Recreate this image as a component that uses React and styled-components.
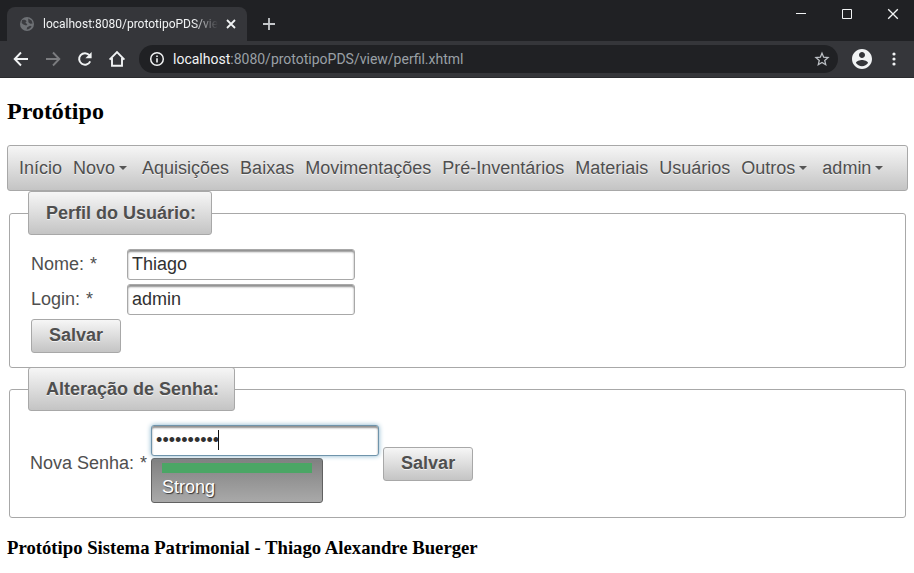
import React, { useState } from "react";
import styled, { createGlobalStyle, css } from "styled-components";

const GlobalStyle = createGlobalStyle`
  * { box-sizing: border-box; }
  body {
    margin: 0;
    background: #fff;
    color: #000;
    font-family: "Liberation Serif", "Times New Roman", serif;
  }
`;

const sans = css`
  font-family: "Liberation Sans", Arial, sans-serif;
  font-size: 18px;
  line-height: 20px;
`;

const greyFace = css`
  border: 1px solid #a8a8a8;
  border-radius: 3px;
  background: linear-gradient(to bottom, #f6f6f6 0%, #c4c4c4 100%);
  color: #4f4f4f;
  text-shadow: 0 1px 0 rgba(255, 255, 255, 0.7);
`;

/* Browser window */

const BrowserChrome = styled.header`
  background: #202124;
  color: #f1f3f4;
  font-family: Roboto, "Segoe UI", sans-serif;
`;

const TabStrip = styled.div`
  display: flex;
  align-items: flex-start;
  height: 41px;
  padding-left: 7px;
`;

const Tab = styled.div`
  display: flex;
  align-items: center;
  width: 240px;
  height: 34px;
  margin-top: 7px;
  padding: 0 8px 0 12px;
  border-radius: 8px 8px 0 0;
  background: #35363a;
`;

const TabTitle = styled.span`
  flex: 1;
  min-width: 0;
  margin: 0 5px 0 8px;
  overflow: hidden;
  white-space: nowrap;
  font-size: 12px;
  line-height: 16px;
  mask-image: linear-gradient(to right, #000 86%, transparent 100%);
`;

const IconButton = styled.button`
  display: flex;
  flex: none;
  align-items: center;
  justify-content: center;
  width: ${(p) => p.$size}px;
  height: ${(p) => p.$size}px;
  padding: 0;
  border: 0;
  background: none;
  color: ${(p) => p.$color || "#f1f3f4"};
`;

const NewTab = styled(IconButton)`
  margin: 10px 0 0 8px;
`;

const WindowControls = styled.div`
  display: flex;
  gap: 18px;
  margin-left: auto;
  padding-right: 7px;
`;

const Toolbar = styled.div`
  display: flex;
  align-items: center;
  height: 37px;
  padding: 0 6px 0 7px;
  border-bottom: 1px solid #2a2b2e;
  background: #35363a;
`;

const NavButtons = styled.div`
  display: flex;
  gap: 4px;
  margin-right: 8px;
`;

const AddressBar = styled.div`
  display: flex;
  flex: 1;
  align-items: center;
  height: 28px;
  padding: 0 8px 0 10px;
  border-radius: 14px;
  background: #202124;
`;

const Address = styled.span`
  flex: 1;
  margin-left: 8px;
  font-size: 14px;
  line-height: 18px;
  color: #9aa0a6;

  b {
    font-weight: 400;
    color: #f1f3f4;
  }
`;

const ToolbarEnd = styled.div`
  display: flex;
  gap: 4px;
  margin-left: 10px;
`;

/* Page */

const Page = styled.main`
  padding: 19px 6px 8px 7px;
`;

const PageTitle = styled.h2`
  margin: 0 0 20px;
  font-size: 24px;
  line-height: 28px;
`;

const Menubar = styled.nav`
  ${sans}
  ${greyFace}
  display: flex;
  align-items: center;
  gap: 11px;
  min-height: 46px;
  padding: 0 11px;
  white-space: nowrap;
`;

const MenuLink = styled.a`
  display: flex;
  align-items: center;
  color: inherit;
  text-decoration: none;

  svg {
    margin: 0 4px;
  }
`;

const Fieldset = styled.fieldset`
  ${sans}
  min-width: 0;
  margin: 0 2px -1px;
  padding: 14px 21px 14px 18px;
  border: 1px solid #a8a8a8;
  border-radius: 3px;
  color: #4f4f4f;
`;

const Legend = styled.legend`
  ${greyFace}
  height: 44px;
  padding: 11px 15px 11px 17px;
  font-weight: 700;
`;

const ProfileForm = styled.form`
  display: grid;
  grid-template-columns: 92px 1fr;
  gap: 4px;
  justify-items: start;
  padding-left: 3px;
`;

const PasswordForm = styled.form`
  display: flex;
  align-items: center;
  gap: 4px;
  padding-left: 2px;
`;

const Label = styled.label`
  display: flex;
  align-self: center;
  align-items: baseline;
  gap: 6px;
  padding-bottom: 2px;
  white-space: nowrap;
`;

const TextInput = styled.input`
  ${sans}
  display: block;
  width: 228px;
  height: 31px;
  padding: 4px;
  border: 1px solid #a8a8a8;
  border-radius: 3px;
  outline: none;
  background: #fff;
  box-shadow: inset 0 2px 2px #8f8f8f;
  color: #313131;
  caret-color: transparent;

  ${(p) =>
    p.$active &&
    css`
      border-color: #6f94ab;
      box-shadow: 0 0 5px #85b2cb, inset 0 2px 2px #8f8f8f;
    `}
`;

const PushButton = styled.button`
  ${sans}
  ${greyFace}
  height: 34px;
  padding: 0 17px 2px;
  font-weight: 700;
`;

const PasswordField = styled.div`
  display: grid;
  gap: 2px;
`;

const InputWrap = styled.div`
  position: relative;
`;

const Caret = styled.span`
  position: absolute;
  top: 5px;
  left: 67px;
  width: 1px;
  height: 20px;
  background: #111;
`;

const StrengthPanel = styled.output`
  display: block;
  width: 172px;
  height: 45px;
  padding: 4px 10px;
  border: 1px solid #616161;
  border-radius: 3px;
  background: linear-gradient(to bottom, #808080, #a9a9a9);
  color: #fff;
  text-shadow: 1px 1px 1px #333;
`;

const StrengthBar = styled.div`
  height: 10px;
  margin-bottom: 4px;
  background: #4ba665;
`;

const Footer = styled.h3`
  margin: 21px 0 0;
  line-height: 20px;
`;

/* Icons */

const Icon = ({ size, box = 24, children }) => (
  <svg width={size} height={size} viewBox={`0 0 ${box} ${box}`} fill="none" stroke="currentColor" aria-hidden="true">
    {children}
  </svg>
);

const GlobeIcon = () => (
  <Icon size={16} box={16}>
    <circle cx="8" cy="8" r="7" fill="#6e7175" stroke="none" />
    <path
      d="M3 4.2C4.6 3.4 6.4 4 7.6 5.2L6.4 6.8 8.4 8.2 7.2 9.6 4.4 8.6 2.6 7zM9.2 2.6L12.6 4.4 13.6 7.4 11.2 7.8 9.4 6.2zM7.6 13.4L8.2 11.2 11 9.8 12.6 10.2C11.8 12 10 13.4 7.6 13.4z"
      fill="#3b3c40"
      stroke="none"
    />
  </Icon>
);

const ArrowIcon = ({ forward }) => (
  <Icon size={16} box={16}>
    <path d={forward ? "M1 8h13M8 1.5L14.3 8 8 14.5" : "M15 8H2M8 1.5L1.7 8 8 14.5"} strokeWidth="1.9" />
  </Icon>
);

const ReloadIcon = () => (
  <Icon size={16} box={16}>
    <path d="M13.2 10.4A5.8 5.8 0 1 1 12.4 4.2" strokeWidth="2" />
    <path d="M14.6 1v6.3H8.4z" fill="currentColor" stroke="none" />
  </Icon>
);

const HomeIcon = () => (
  <Icon size={18} box={18}>
    <path d="M1.6 9.6L9 2.2l7.4 7.4M4 8v7.8h10V8" strokeWidth="1.9" />
  </Icon>
);

const InfoIcon = () => (
  <Icon size={16} box={16}>
    <circle cx="8" cy="8" r="6.3" strokeWidth="1.5" />
    <path d="M8 7.2v4.2M8 4.4v1.7" strokeWidth="1.6" />
  </Icon>
);

const StarIcon = () => (
  <Icon size={16} box={24}>
    <path
      d="M12 3.2l2.5 6 6.6.6-5 4.3 1.5 6.4L12 17.1l-5.6 3.4 1.5-6.4-5-4.3 6.6-.6z"
      strokeWidth="1.9"
    />
  </Icon>
);

const ProfileIcon = () => (
  <Icon size={24}>
    <path
      d="M12 2C6.48 2 2 6.48 2 12s4.48 10 10 10 10-4.48 10-10S17.52 2 12 2zm0 3c1.66 0 3 1.34 3 3s-1.34 3-3 3-3-1.34-3-3 1.34-3 3-3zm0 14.2c-2.5 0-4.71-1.28-6-3.22.03-1.99 4-3.08 6-3.08 1.99 0 5.97 1.09 6 3.08-1.29 1.94-3.5 3.22-6 3.22z"
      fill="currentColor"
      stroke="none"
    />
  </Icon>
);

const DotsIcon = () => (
  <Icon size={16} box={16}>
    <g fill="currentColor" stroke="none">
      <circle cx="8" cy="3" r="1.6" />
      <circle cx="8" cy="8" r="1.6" />
      <circle cx="8" cy="13" r="1.6" />
    </g>
  </Icon>
);

const CrossIcon = ({ size, weight }) => (
  <Icon size={size} box={10}>
    <path d="M1 1l8 8M9 1L1 9" strokeWidth={weight} />
  </Icon>
);

const CaretDown = () => (
  <svg width="8" height="4" viewBox="0 0 8 4" aria-hidden="true">
    <path d="M0 0h8L4 4z" fill="#555" />
  </svg>
);

const menu = [
  { label: "Início" },
  { label: "Novo", submenu: true },
  { label: "Aquisições" },
  { label: "Baixas" },
  { label: "Movimentações" },
  { label: "Pré-Inventários" },
  { label: "Materiais" },
  { label: "Usuários" },
  { label: "Outros", submenu: true },
  { label: "admin", submenu: true },
];

function Field({ id, label, value, onChange }) {
  return (
    <>
      <Label htmlFor={id}>
        {label} <span>*</span>
      </Label>
      <TextInput id={id} value={value} onChange={(e) => onChange(e.target.value)} />
    </>
  );
}

export default function App() {
  const [name, setName] = useState("Thiago");
  const [login, setLogin] = useState("admin");
  const [password, setPassword] = useState("abcdefghij");
  const stop = (e) => e.preventDefault();

  return (
    <>
      <GlobalStyle />
      <BrowserChrome>
        <TabStrip>
          <Tab>
            <GlobeIcon />
            <TabTitle>localhost:8080/prototipoPDS/view</TabTitle>
            <IconButton $size={16} aria-label="Close tab">
              <CrossIcon size={10} weight={1.8} />
            </IconButton>
          </Tab>
          <NewTab $size={28} $color="#c4c7ca" aria-label="New tab">
            <Icon size={12} box={12}>
              <path d="M6 0v12M0 6h12" strokeWidth="1.8" />
            </Icon>
          </NewTab>
          <WindowControls>
            <IconButton $size={28} aria-label="Minimize">
              <Icon size={10} box={10}>
                <path d="M0 4.5h10" />
              </Icon>
            </IconButton>
            <IconButton $size={28} aria-label="Maximize">
              <Icon size={10} box={10}>
                <path d="M.5.5h9v9h-9z" />
              </Icon>
            </IconButton>
            <IconButton $size={28} aria-label="Close window">
              <CrossIcon size={12} weight={1.1} />
            </IconButton>
          </WindowControls>
        </TabStrip>
        <Toolbar>
          <NavButtons>
            <IconButton $size={28} aria-label="Back">
              <ArrowIcon />
            </IconButton>
            <IconButton $size={28} $color="#7b7c7f" aria-label="Forward">
              <ArrowIcon forward />
            </IconButton>
            <IconButton $size={28} aria-label="Reload">
              <ReloadIcon />
            </IconButton>
            <IconButton $size={28} aria-label="Home">
              <HomeIcon />
            </IconButton>
          </NavButtons>
          <AddressBar>
            <InfoIcon />
            <Address>
              <b>localhost</b>:8080/prototipoPDS/view/perfil.xhtml
            </Address>
            <IconButton $size={16} $color="#bdc1c6" aria-label="Bookmark">
              <StarIcon />
            </IconButton>
          </AddressBar>
          <ToolbarEnd>
            <IconButton $size={28} aria-label="Profile">
              <ProfileIcon />
            </IconButton>
            <IconButton $size={28} aria-label="Menu">
              <DotsIcon />
            </IconButton>
          </ToolbarEnd>
        </Toolbar>
      </BrowserChrome>
      <Page>
        <PageTitle>Protótipo</PageTitle>
        <Menubar>
          {menu.map((item) => (
            <MenuLink key={item.label} href="#">
              {item.label}
              {item.submenu && <CaretDown />}
            </MenuLink>
          ))}
        </Menubar>
        <Fieldset>
          <Legend>Perfil do Usuário:</Legend>
          <ProfileForm onSubmit={stop}>
            <Field id="nome" label="Nome:" value={name} onChange={setName} />
            <Field id="login" label="Login:" value={login} onChange={setLogin} />
            <PushButton>Salvar</PushButton>
          </ProfileForm>
        </Fieldset>
        <Fieldset>
          <Legend>Alteração de Senha:</Legend>
          <PasswordForm onSubmit={stop}>
            <Label htmlFor="senha">
              Nova Senha: <span>*</span>
            </Label>
            <PasswordField>
              <InputWrap>
                <TextInput
                  id="senha"
                  type="password"
                  $active
                  value={password}
                  onChange={(e) => setPassword(e.target.value)}
                />
                <Caret />
              </InputWrap>
              <StrengthPanel htmlFor="senha">
                <StrengthBar />
                Strong
              </StrengthPanel>
            </PasswordField>
            <PushButton>Salvar</PushButton>
          </PasswordForm>
        </Fieldset>
        <Footer>Protótipo Sistema Patrimonial - Thiago Alexandre Buerger</Footer>
      </Page>
    </>
  );
}
